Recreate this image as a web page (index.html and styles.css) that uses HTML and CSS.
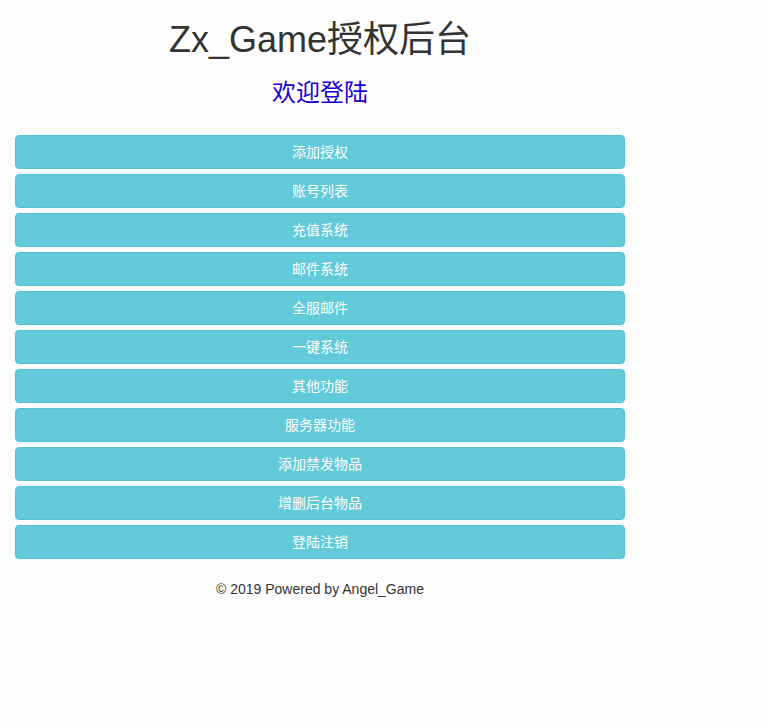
FILE: index.html
```html
<!DOCTYPE html>
<html lang="zh-CN">
<head>
<meta charset="utf-8">
<title>Zx_Game授权后台</title>
<link rel="stylesheet" href="styles.css">
</head>
<body>
<div class="container">
  <h1 class="title">Zx_Game授权后台</h1>
  <h3 class="subtitle">欢迎登陆</h3>
  <div class="menu">
    <a class="btn" href="#">添加授权</a>
    <a class="btn" href="#">账号列表</a>
    <a class="btn" href="#">充值系统</a>
    <a class="btn" href="#">邮件系统</a>
    <a class="btn" href="#">全服邮件</a>
    <a class="btn" href="#">一键系统</a>
    <a class="btn" href="#">其他功能</a>
    <a class="btn" href="#">服务器功能</a>
    <a class="btn" href="#">添加禁发物品</a>
    <a class="btn" href="#">增删后台物品</a>
    <a class="btn" href="#">登陆注销</a>
  </div>
  <p class="footer">© 2019 Powered by Angel_Game</p>
</div>
</body>
</html>
```
FILE: styles.css
```css
html, body {
  margin: 0;
  padding: 0;
  background: #fefefe;
}
body {
  font-family: "Liberation Sans", Arial, "Noto Sans CJK SC", sans-serif;
  font-size: 14px;
  line-height: 1.42857;
  color: #333;
}
.container {
  width: 640px;
  box-sizing: border-box;
  padding: 0 15px;
}
.title {
  margin: 20px 0 10px;
  font-size: 36px;
  font-weight: 400;
  line-height: 1.1;
  text-align: center;
  color: #333;
}
.subtitle {
  margin: 20px 0 10px;
  font-size: 24px;
  font-weight: 400;
  line-height: 1.1;
  text-align: center;
  color: #1a00d6;
}
.menu {
  display: flex;
  flex-direction: column;
  gap: 5px;
  margin-top: 29px;
}
.btn {
  display: block;
  height: 34px;
  box-sizing: border-box;
  padding: 6px 12px;
  border: 1px solid #52c2d6;
  border-radius: 4px;
  background: #62cad9;
  color: #fff;
  text-align: center;
  text-decoration: none;
  font-size: 14px;
  line-height: 20px;
}
.footer {
  margin: 20px 0 0;
  text-align: center;
  font-size: 14px;
  line-height: 20px;
  color: #333;
}
```
